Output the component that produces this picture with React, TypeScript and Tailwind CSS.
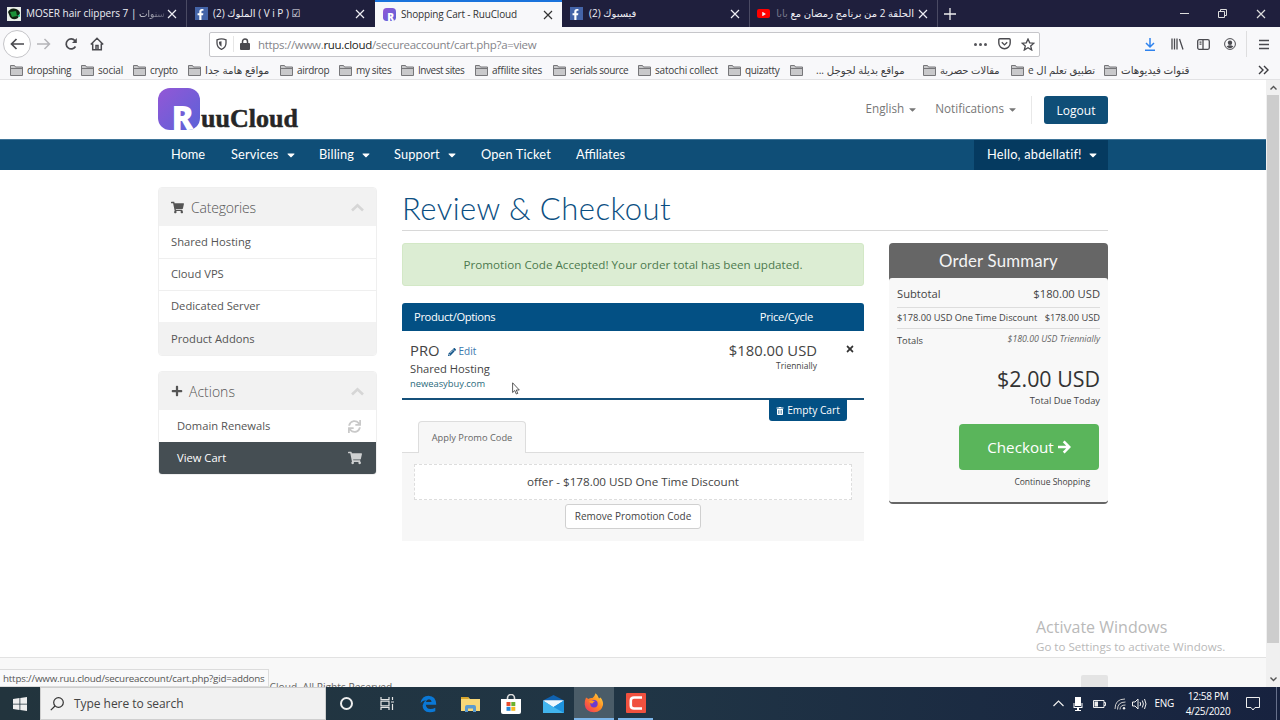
import React from "react";
import {
  FaShoppingCart,
  FaPlus,
  FaSync,
  FaPencilAlt,
  FaTimes,
  FaTrashAlt,
  FaFacebookF,
  FaPlay,
  FaCaretDown,
} from "react-icons/fa";

const ui = "font-['Open_Sans','DejaVu_Sans',sans-serif]";

function CloseX({ className = "" }: { className?: string }) {
  return (
    <svg viewBox="0 0 10 10" className={"h-[10px] w-[10px] shrink-0 " + className} stroke="currentColor" strokeWidth="1.2" fill="none">
      <path d="M1 1l8 8M9 1l-8 8" />
    </svg>
  );
}

function FacebookIcon() {
  return (
    <span className="flex h-[13px] w-[13px] shrink-0 items-end justify-end bg-[#4464a8] pr-[2px] text-white">
      <FaFacebookF size={11} />
    </span>
  );
}

function RuuMark({ size }: { size: number }) {
  return (
    <svg width={size} height={size} viewBox="0 0 42 42" className="shrink-0">
      <defs>
        <linearGradient id="ruu" x1="0" y1="0" x2="1" y2="1">
          <stop offset="0" stopColor="#9357d6" />
          <stop offset="1" stopColor="#5b62d8" />
        </linearGradient>
        <clipPath id="ruuclip">
          <rect width="42" height="42" rx="12" />
        </clipPath>
      </defs>
      <rect width="42" height="42" rx="12" fill="url(#ruu)" />
      <g clipPath="url(#ruuclip)">
        <text x="13.5" y="42" fill="#fff" fontSize="33" fontWeight="800" fontFamily="Open Sans, sans-serif">R</text>
      </g>
    </svg>
  );
}

function TabBar() {
  return (
    <div className="flex h-[27px] shrink-0 bg-[#1f1f3d] text-[10px] text-[#eeeef4]">
      <div className="flex w-[187px] items-center border-r border-[#4a4a63] pl-[7px] pr-[9px]">
        <svg width="14" height="14" viewBox="0 0 14 14" className="mr-[5px] shrink-0">
          <rect width="14" height="14" fill="#e8ede8" />
          <path d="M1 5Q3 1 7 1.500Q12 2 13 6L11 11Q6 14 3 10Z" fill="#10210f" />
          <path d="M3 5l6-1 1 5-5 1z" fill="#1c9138" />
          <path d="M10 9l3-2v3z" fill="#2c8" />
        </svg>
        <span className="whitespace-nowrap">
          MOSER hair clippers 7 | <span className="bg-linear-to-r from-white to-[#55556c] bg-clip-text text-[9px] text-transparent">سنوات</span>
        </span>
        <CloseX className="ml-auto" />
      </div>
      <div className="flex w-[188px] items-center gap-[5px] pl-[8px] pr-[10px]">
        <FacebookIcon />
        <span className="whitespace-nowrap" dir="ltr">(2) <span className="text-[10px]">الملوك</span> ( V i P ) ☑</span>
        <CloseX className="ml-auto" />
      </div>
      <div className="flex w-[187px] items-center gap-[5px] border-t-2 border-[#1a73dc] bg-[#f8f8fa] pl-[8px] pr-[9px] text-[#333]">
        <RuuMark size={13} />
        <span className="whitespace-nowrap tracking-[-0.17px]">Shopping Cart - RuuCloud</span>
        <CloseX className="ml-auto" />
      </div>
      <div className="flex w-[188px] items-center gap-[6px] border-r border-[#4a4a63] pl-[8px] pr-[9px]">
        <FacebookIcon />
        <span className="whitespace-nowrap">(2) <span className="text-[10px]">فيسبوك</span></span>
        <CloseX className="ml-auto" />
      </div>
      <div className="flex w-[188px] items-center border-r border-[#4a4a63] pl-[7px] pr-[9px]">
        <span className="flex h-[9px] w-[13px] shrink-0 items-center justify-center rounded-[2px] bg-[#f00]">
          <FaPlay size={4} />
        </span>
        <span className="ml-auto mr-[4px] whitespace-nowrap text-[10px]" dir="rtl">
          الحلقة 2 من برنامج رمضان مع <span className="text-[#77778a]">بابا</span>
        </span>
        <CloseX />
      </div>
      <svg width="12" height="12" viewBox="0 0 12 12" className="ml-[6px] mt-[8px] shrink-0" stroke="#eee" strokeWidth="1.3">
        <path d="M6 0v12M0 6h12" />
      </svg>
      <div className="ml-auto flex items-center gap-[29px] pr-[14px] text-[#ddd]">
        <span className="h-px w-[9px] bg-[#ddd]" />
        <svg width="9" height="9" viewBox="0 0 9 9" fill="none" stroke="currentColor">
          <path d="M.5 2.500h6v6h-6zM2.500 2.500v-2h6v6h-2" />
        </svg>
        <CloseX />
      </div>
    </div>
  );
}

function Toolbar() {
  return (
    <div className="flex h-[34px] shrink-0 items-center bg-[#f8f8fa] text-[#4a4a4f]">
      <span className="ml-[3px] flex h-[28px] w-[28px] items-center justify-center rounded-full border border-[#c4c4c8] bg-white">
        <svg width="14" height="12" viewBox="0 0 14 12" fill="none" stroke="currentColor" strokeWidth="1.700">
          <path d="M14 6H1.500M6.500 1l-5 5 5 5" />
        </svg>
      </span>
      <svg width="14" height="12" viewBox="0 0 14 12" fill="none" stroke="#b4b4b8" strokeWidth="1.500" className="ml-[6px]">
        <path d="M0 6h12.500M7.500 1l5 5-5 5" />
      </svg>
      <svg width="14" height="14" viewBox="0 0 14 14" fill="none" stroke="currentColor" strokeWidth="1.700" className="ml-[13px]">
        <path d="M11.500 9.500A5 5 0 1 1 11 3.700" />
        <path d="M12.800 1v5H8z" fill="currentColor" stroke="none" />
      </svg>
      <svg width="14" height="14" viewBox="0 0 14 14" fill="none" stroke="currentColor" strokeWidth="1.500" className="ml-[12px]">
        <path d="M.8 7.500L7 1.300l6.200 6.200M2.700 6.500v6.300h8.600V6.500M6 12.500v-4h2v4" />
      </svg>
      <div className="ml-[105px] flex h-[25px] w-[831px] items-center rounded-[2px] border border-[#c6c6ca] bg-white">
        <svg width="11" height="12" viewBox="0 0 11 12" fill="none" stroke="currentColor" strokeWidth="1.300" className="ml-[6px]">
          <path d="M1 1.800Q5.500 0 10 1.800V5Q10 9.500 5.500 11.300Q1 9.500 1 5Z" />
          <path d="M5.500 3.300v5.500Q3 7.500 3 5V3.700Z" fill="currentColor" stroke="none" />
        </svg>
        <span className="ml-[6px] h-[16px] w-px bg-[#e6e6e6]" />
        <svg width="10" height="12" viewBox="0 0 10 12" className="ml-[6px]">
          <path d="M2.500 6V3.500a2.500 2.500 0 0 1 5 0V6" fill="none" stroke="#4a4a4f" strokeWidth="1.500" />
          <rect y="5" width="10" height="7" rx="1" fill="#4a4a4f" />
        </svg>
        <span className="ml-[8px] pt-[2px] text-[11.5px] tracking-[-0.3px] text-[#85858a]">
          https://www.<span className="text-[#1c1c20]">ruu.cloud</span>/secureaccount/cart.php?a=view
        </span>
        <span className="ml-auto flex gap-[2px]">
          <i className="h-[3px] w-[3px] rounded-full bg-[#55555a]" />
          <i className="h-[3px] w-[3px] rounded-full bg-[#55555a]" />
          <i className="h-[3px] w-[3px] rounded-full bg-[#55555a]" />
        </span>
        <svg width="13" height="12" viewBox="0 0 13 12" fill="none" stroke="currentColor" strokeWidth="1.400" className="ml-[11px]">
          <path d="M1.800.8h9.400q1 0 1 1V5a5.700 5.700 0 0 1-11.400 0V1.800q0-1 1-1zM3.800 4.300l2.700 2.600 2.700-2.600" />
        </svg>
        <svg width="14" height="13" viewBox="0 0 14 13" fill="none" stroke="currentColor" strokeWidth="1.300" className="ml-[10px] mr-[4px]">
          <path d="M7 1l1.700 3.800 4.200.4-3.200 2.700 1 4.100L7 9.800 3.300 12l1-4.100L1.100 5.200l4.200-.4z" />
        </svg>
      </div>
      <svg width="12" height="13" viewBox="0 0 12 13" fill="none" stroke="#2f83ee" strokeWidth="1.500" className="ml-[104px]">
        <path d="M6 0v9M2 5l4 4 4-4M1 12.200h10" />
      </svg>
      <svg width="13" height="12" viewBox="0 0 13 12" fill="none" stroke="currentColor" strokeWidth="1.300" className="ml-[15px]">
        <path d="M1 .5v11M3.500 .5v11M6 .5v11M8.500 1l3.500 10.500" />
      </svg>
      <svg width="13" height="11" viewBox="0 0 13 11" fill="none" stroke="currentColor" strokeWidth="1.300" className="ml-[13px]">
        <rect x=".7" y=".7" width="11.600" height="9.600" rx="1.500" />
        <path d="M6 1v9M2.500 3.200H4.500M2.500 5.200H4.500" />
      </svg>
      <svg width="12" height="12" viewBox="0 0 12 12" className="ml-[14px]">
        <circle cx="6" cy="6" r="5.400" fill="none" stroke="#4a4a4f" strokeWidth="1" />
        <circle cx="6" cy="4.800" r="2.200" fill="#4a4a4f" />
        <path d="M2.500 8.500Q6 6 9.500 8.500Q6 12 2.500 8.500z" fill="#4a4a4f" />
      </svg>
      <span className="ml-[10px] h-[26px] w-px bg-[#dededf]" />
      <svg width="10" height="11" viewBox="0 0 10 11" stroke="currentColor" strokeWidth="1.500" className="ml-[12px]">
        <path d="M0 1.500h10M0 5.500h10M0 9.500h10" />
      </svg>
    </div>
  );
}

const bookmarks = [
  { t: "dropshing", w: "w-[71px]", c: "tracking-[-0.35px]" },
  { t: "social", w: "w-[52px]", c: "tracking-[-0.2px]" },
  { t: "crypto", w: "w-[55px]", c: "tracking-[-0.3px]" },
  { t: "مواقع هامة جدا", w: "w-[92px]", c: "text-[10.4px]" },
  { t: "airdrop", w: "w-[59px]", c: "tracking-[-0.3px]" },
  { t: "my sites", w: "w-[62px]", c: "tracking-[-0.35px]" },
  { t: "Invest sites", w: "w-[74px]", c: "tracking-[-0.45px]" },
  { t: "affilite sites", w: "w-[78px]", c: "tracking-[-0.2px]" },
  { t: "serials source", w: "w-[85px]", c: "tracking-[-0.4px]" },
  { t: "satochi collect", w: "w-[90px]", c: "tracking-[-0.2px]" },
  { t: "quizatty", w: "w-[62px]", c: "tracking-[-0.35px]" },
  { t: "مواقع بديلة لجوجل ...", w: "w-[133px]", c: "ml-[9px] text-[10.2px]" },
  { t: "مقالات حصرية", w: "w-[88px]", c: "text-[10px]" },
  { t: "تطبيق تعلم ال e", w: "w-[93px]", c: "text-[10.1px]" },
  { t: "قنوات فيديوهات", w: "w-[90px]", c: "text-[10.3px]" },
];

function Bookmarks() {
  return (
    <div className="flex h-[19px] shrink-0 items-center border-b border-[#e2e2e4] bg-[#f8f8fa] pl-[10px] text-[10px] text-[#3c3c40]">
      {bookmarks.map((b) => (
        <div key={b.t} className={"flex shrink-0 items-center gap-[4px] " + b.w}>
          <svg width="13" height="11" viewBox="0 0 13 11" className="shrink-0">
            <path d="M.5 10.500V.5h4l1 1.500h7v8.500z" fill="#c9c9cb" stroke="#77777a" />
            <path d="M.5 3.500h12" stroke="#77777a" />
          </svg>
          <span dir="auto" className={"whitespace-nowrap leading-[14px] " + b.c}>{b.t}</span>
        </div>
      ))}
      <svg width="11" height="10" viewBox="0 0 11 10" fill="none" stroke="#3c3c40" strokeWidth="1.400" className="ml-auto mr-[11px]">
        <path d="M1 1l4 4-4 4M6 1l4 4-4 4" />
      </svg>
    </div>
  );
}

function SiteHeader() {
  return (
    <div className="h-[59px] bg-white">
      <div className="mx-auto flex h-full w-[950px]">
        <div className="flex pt-[8px]">
          <RuuMark size={42} />
          <span className="mt-[15px] pl-px font-['Liberation_Serif',serif] text-[26px] font-bold leading-[32px] text-[#262626] [-webkit-text-stroke:0.5px_#262626]">uuCloud</span>
        </div>
        <div className="ml-auto flex pt-[16px] text-[11.7px] text-[#777]">
          <span className="flex h-[26px] items-center gap-[3px]">English <FaCaretDown size={11} /></span>
          <span className="ml-[17px] flex h-[26px] items-center gap-[3px]">Notifications <FaCaretDown size={11} /></span>
          <span className="ml-[13px] h-[28px] w-px bg-[#e8e8e8]" />
          <span className="ml-[12px] flex h-[28px] w-[64px] items-center justify-center rounded-[3px] bg-[#0f4e77] pt-px text-[12px] text-white">Logout</span>
        </div>
      </div>
    </div>
  );
}

function SiteNav() {
  return (
    <div className="h-[31px] border-t border-[#3f7599] bg-[#0f4e77]">
      <div className="mx-auto flex h-full w-[950px] items-center pl-[13px] font-['Lato',sans-serif] text-[12.8px] text-white">
        <span className="w-[60px]">Home</span>
        <span className="flex w-[88px] items-center gap-[6px] tracking-[0.15px]">Services <FaCaretDown size={12} /></span>
        <span className="flex w-[75px] items-center gap-[6px] tracking-[0.15px]">Billing <FaCaretDown size={12} /></span>
        <span className="flex w-[87px] items-center gap-[6px] tracking-[0.15px]">Support <FaCaretDown size={12} /></span>
        <span className="w-[95px] tracking-[0.15px]">Open Ticket</span>
        <span>Affiliates</span>
        <span className="ml-auto flex h-full w-[134px] items-center gap-[5px] bg-[#053a60] pl-[13px] tracking-[0.2px]">Hello, abdellatif! <FaCaretDown size={12} /></span>
      </div>
    </div>
  );
}

function PanelHead({ icon, title, className }: { icon: React.ReactNode; title: string; className: string }) {
  return (
    <div className="flex h-[38px] items-center bg-[#f2f2f2] pl-[12px] pr-[12px] text-[#555]">
      {icon}
      <span className={"ml-[6px] text-[14px] font-light " + className}>{title}</span>
      <svg width="13" height="9" viewBox="0 0 13 9" fill="none" stroke="#d6d6d6" strokeWidth="2.600" className="ml-auto">
        <path d="M1 7.500l5.500-5.300L12 7.500" />
      </svg>
    </div>
  );
}

function Sidebar() {
  return (
    <div className="w-[219px] shrink-0 text-[11.2px] text-[#555]">
      <div className="overflow-hidden rounded-[4px] border border-[#efefef]">
        <PanelHead icon={<FaShoppingCart size={13} />} title="Categories" className="pl-px tracking-[-0.2px]" />
        <div className="flex h-[32px] items-center pl-[12px]">Shared Hosting</div>
        <div className="flex h-[32px] items-center border-t border-[#efefef] pl-[12px]">Cloud VPS</div>
        <div className="flex h-[32px] items-center border-t border-[#efefef] pl-[12px]">Dedicated Server</div>
        <div className="flex h-[33px] items-center bg-[#f2f2f2] pl-[12px] pt-px">Product Addons</div>
      </div>
      <div className="mt-[15px] overflow-hidden rounded-[4px] border border-[#efefef]">
        <PanelHead icon={<FaPlus size={12} />} title="Actions" className="" />
        <div className="flex h-[32px] items-center justify-between pl-[18px] pr-[15px]">
          Domain Renewals <FaSync size={13} className="text-[#c9c9c9]" />
        </div>
        <div className="-mx-px flex h-[32px] items-center justify-between bg-[#454e53] pl-[19px] pr-[15px] text-white">
          View Cart <FaShoppingCart size={14} className="text-[#cfd1d2]" />
        </div>
      </div>
    </div>
  );
}

function Cart() {
  return (
    <div className="w-[462px] shrink-0">
      <div className="flex h-[43px] items-center justify-center rounded-[3px] border border-[#d3e8c6] bg-[#dcedd3] pt-px text-[11.67px] text-[#4c7a4e]">
        Promotion Code Accepted! Your order total has been updated.
      </div>
      <div className="mt-[17px] flex h-[28px] items-center justify-between rounded-t-[3px] bg-[#035084] pl-[12px] pr-[51px] text-[11.2px] tracking-[-0.35px] text-white">
        <span>Product/Options</span>
        <span>Price/Cycle</span>
      </div>
      <div className="flex h-[69px] border-b-2 border-[#15507a] pl-[8px] pr-[9px] text-[#444]">
        <div className="pt-[9px]">
          <div className="flex h-[20px] items-center text-[14.8px]">
            PRO
            <span className="ml-[8px] flex items-center gap-[3px] pt-[3px] text-[10px] text-[#3b78ad]">
              <FaPencilAlt size={8} className="text-[#135589]" /> Edit
            </span>
          </div>
          <div className="h-[16px] text-[11.2px] leading-[17px]">Shared Hosting</div>
          <div className="text-[9.35px] leading-[15px] text-[#2a6a7c]">neweasybuy.com</div>
        </div>
        <div className="ml-auto pt-[9px] text-right">
          <div className="text-[14.8px] leading-[20px]">$180.00 USD</div>
          <div className="text-[8.500px] leading-[12px]">Triennially</div>
        </div>
        <FaTimes size={10} className="ml-[28px] mt-[13px] text-[#333]" />
      </div>
      <div className="-mt-px ml-[367px] flex h-[22px] w-[78px] items-center justify-center gap-[3px] rounded-b-[3px] bg-[#035084] pt-[2px] text-[10.2px] text-white">
        <FaTrashAlt size={8} /> Empty Cart
      </div>
      <div className="relative z-10 ml-[16px] flex h-[32px] w-[108px] items-center justify-center rounded-t-[4px] border border-b-0 border-[#ddd] bg-[#f7f7f7] text-[9.300px] text-[#666]">
        Apply Promo Code
      </div>
      <div className="-mt-px flex h-[89px] flex-col items-center border-t border-[#ddd] bg-[#f7f7f7] pt-[11px] text-[#444]">
        <div className="flex h-[36px] w-[438px] items-center justify-center border border-dashed border-[#ddd] bg-white text-[11.67px]">
          offer - $178.00 USD One Time Discount
        </div>
        <div className="mt-[4px] flex h-[25px] w-[136px] shrink-0 items-center justify-center rounded-[3px] border border-[#d0d0d0] bg-white text-[10px]">
          Remove Promotion Code
        </div>
      </div>
    </div>
  );
}

function Summary() {
  return (
    <div className="h-[261px] w-[219px] shrink-0 overflow-hidden rounded-[4px] border-b-2 border-[#666] bg-[#666] text-[#444]">
      <div className="flex h-[35px] items-center justify-center font-['Lato',sans-serif] text-[16.800px] tracking-[0.2px] text-[#f4f4f4]">Order Summary</div>
      <div className="h-[225px] rounded-[3px] bg-[#f8f8f8] px-[8px] pt-[4px]">
        <div className="flex h-[26px] items-center justify-between border-b border-[#ddd] text-[11.200px]">
          <span>Subtotal</span>
          <span>$180.00 USD</span>
        </div>
        <div className="flex h-[21px] items-center justify-between border-b border-[#ddd] text-[9.300px]">
          <span className="whitespace-nowrap">$178.00 USD One Time Discount</span>
          <span className="whitespace-nowrap">$178.00 USD</span>
        </div>
        <div className="flex h-[23px] items-center justify-between text-[9.300px]">
          <span>Totals</span>
          <span className="pb-[2px] text-[8.800px] italic text-[#666]">$180.00 USD Triennially</span>
        </div>
        <div className="mt-[10px] text-right text-[21.400px] leading-[34px] text-[#333]">$2.00 USD</div>
        <div className="text-right text-[9.300px] leading-[10px]">Total Due Today</div>
        <div className="ml-auto mr-px mt-[18px] flex h-[46px] w-[140px] items-center justify-center gap-[4px] rounded-[4px] bg-[#5ab55b] text-[15.200px] text-white">
          Checkout
          <svg width="13" height="14" viewBox="0 0 13 14" fill="none" stroke="#fff" strokeWidth="2.600">
            <path d="M0 7h11M5.700 1.300L11.300 7l-5.600 5.700" />
          </svg>
        </div>
        <div className="mr-[10px] mt-[5px] text-right text-[8.500px] leading-[14px]">Continue Shopping</div>
      </div>
    </div>
  );
}

function Taskbar() {
  return (
    <div className="flex h-[33px] shrink-0 items-center bg-linear-to-r from-[#22343d] via-[#203545] to-[#17223f] text-white">
      <svg width="14" height="14" viewBox="0 0 14 14" className="ml-[13px] shrink-0" fill="#eee">
        <path d="M0 2l6.500-1v5.700H0zM7.300.9L14 0v6.700H7.300zM0 7.500h6.500v5.600L0 12.100zM7.300 7.500H14V14l-6.700-.9z" />
      </svg>
      <div className="ml-[13px] flex h-full w-[286px] items-center border border-[#cfcfcf] bg-[#f1f1f1] pl-[9px] text-[12px] tracking-[-0.05px] text-[#444]">
        <svg width="14" height="14" viewBox="0 0 14 14" fill="none" stroke="#333" strokeWidth="1.200" className="mr-[10px]">
          <circle cx="8.500" cy="5.500" r="4.800" />
          <path d="M5 9L.8 13.200" />
        </svg>
        Type here to search
      </div>
      <div className="flex w-[41px] justify-center">
        <i className="h-[13px] w-[13px] rounded-full border-2 border-[#eee]" />
      </div>
      <div className="flex w-[40px] justify-center">
        <svg width="14" height="13" viewBox="0 0 14 13" fill="none" stroke="#e6e6e6" strokeWidth="1.200">
          <path d="M1 0v2.500h8V0M1 13v-2.500h8V13M1 4.200h8v4.600H1zM12.500 0v3M12.500 7v6M11 5h3" />
        </svg>
      </div>
      <div className="flex w-[43px] justify-center">
        <svg width="17" height="18" viewBox="0 0 17 18">
          <path d="M.5 8Q2 .8 8.500.8Q16 1 16.300 9.800H5.800Q6.300 14 10.500 14Q13 14 15.300 12.700V16.200Q12.500 17.500 9.500 17.300Q2.500 16.800 2.600 10.500Q2.900 7 6 5.300Q2.500 5.500.5 8M5.900 7H11.600Q11.500 4.400 9 4.300Q6.500 4.400 5.900 7" fill="#0a78d6" fillRule="evenodd" />
        </svg>
      </div>
      <div className="flex w-[40px] justify-center">
        <svg width="19" height="16" viewBox="0 0 19 16">
          <path d="M0 1h7l2 2h10v12H0z" fill="#f8d878" />
          <path d="M0 1h7l1 2H0z" fill="#d9a62c" />
          <path d="M4 16v-5q0-2 2-2h7q2 0 2 2v5h-3v-3.500H7V16z" fill="#5b9bd0" />
        </svg>
      </div>
      <div className="flex w-[42px] justify-center">
        <svg width="20" height="20" viewBox="0 0 20 20">
          <path d="M6.500 6V4a3.500 3.500 0 0 1 7 0v2" fill="none" stroke="#ddd" strokeWidth="1.600" />
          <path d="M0 5h20v13q0 2-2 2H2q-2 0-2-2z" fill="#fff" />
          <path d="M5.500 8h4v4h-4z" fill="#e84b2c" />
          <path d="M10.300 8h4v4h-4z" fill="#6ab12e" />
          <path d="M5.500 12.800h4v4h-4z" fill="#2487d8" />
          <path d="M10.300 12.800h4v4h-4z" fill="#f5b921" />
        </svg>
      </div>
      <div className="flex w-[42px] justify-center">
        <svg width="21" height="18" viewBox="0 0 21 18">
          <path d="M0 5.500L10.500 0 21 5.500V18H0z" fill="#0f62b0" />
          <path d="M1 5.500h19L10.500 12z" fill="#eef7fd" />
          <path d="M0 5.500L10.500 12 21 5.500V18H0z" fill="#42b5ee" />
          <path d="M0 5.500h21L10.500 12z" fill="#eef7fd" />
          <path d="M21 5.500V18L10.500 12z" fill="#1e93de" />
        </svg>
      </div>
      <div className="flex h-full w-[40px] items-center justify-center border-b-2 border-[#7db6ea] bg-[#4a5c68]">
        <svg width="20" height="20" viewBox="0 0 20 20">
          <defs>
            <linearGradient id="fx" x1="1" y1="0" x2="0" y2="1">
              <stop offset="0" stopColor="#ffe14a" />
              <stop offset=".45" stopColor="#ff8a20" />
              <stop offset="1" stopColor="#f02a68" />
            </linearGradient>
          </defs>
          <path d="M2 4.500L4.500 6Q6 4.500 8.500 5Q10.500 4 11.500.3Q14 2 15 5.500L16.500 4.500Q19.500 8 19 12Q17.500 19 10 19.300Q1.500 19 .7 11.500Q.6 7.500 2 4.500z" fill="url(#fx)" />
          <circle cx="10" cy="10.800" r="3.700" fill="#6b3ad0" />
          <path d="M5 8.500q3-2 6 .3q-2 .2-2.500 1.700q-2 .5-3.500-2z" fill="#ff9b22" />
        </svg>
      </div>
      <div className="ml-[4px] flex h-full w-[35px] items-center justify-center border-b-2 border-[#7db6ea]">
        <svg width="20" height="20" viewBox="0 0 20 20">
          <rect width="20" height="20" rx="1" fill="#f0513f" />
          <path d="M16 4.500H8Q4.800 4.500 4.800 7.500v5Q4.800 15.500 8 15.500h8" fill="none" stroke="#fff" strokeWidth="2.600" />
        </svg>
      </div>
      <div className="ml-auto flex h-full items-center text-[10px]">
        <svg width="11" height="7" viewBox="0 0 11 7" fill="none" stroke="#eee" strokeWidth="1.200"><path d="M.5 6l5-5 5 5" /></svg>
        <svg width="10" height="14" viewBox="0 0 10 14" className="ml-[9px]" fill="#fff"><path d="M2 0h6v9H2zM.5 6h1v4h7V6h1v5H6v2h2v1H2v-1h2v-2H.5z" /></svg>
        <svg width="13" height="8" viewBox="0 0 13 8" className="ml-[10px]" fill="none" stroke="#eee"><path d="M.5.5h10.500v7H.5zM11 2.500h1.500v3H11" /><path d="M1.500 1.500H5v5H1.500z" fill="#eee" stroke="none" /></svg>
        <svg width="12" height="12" viewBox="0 0 12 12" className="ml-[8px]" fill="none" stroke="#ccc"><path d="M1 11Q1 1 11 1M3.500 11.500Q3.500 4 11.500 4M6 11.500Q6 7 11.500 7" /><circle cx="10" cy="10.300" r="1.200" fill="#eee" stroke="none" /></svg>
        <svg width="15" height="12" viewBox="0 0 15 12" className="ml-[6px]" fill="none" stroke="#eee"><path d="M.5 4H3l3-3v10L3 8H.5zM8 4q1.300 2 0 4M10.300 2.500q2.200 3.500 0 7M12.500 1q3 5 0 10" /></svg>
        <span className="ml-[8px] tracking-[-0.3px]">ENG</span>
        <div className="ml-[10px] w-[48px] text-center tracking-[-0.3px] leading-[15px]">
          <div className="whitespace-nowrap">12:58 PM</div>
          <div className="whitespace-nowrap">4/25/2020</div>
        </div>
        <svg width="14" height="14" viewBox="0 0 14 14" className="ml-[14px]" fill="none" stroke="#eee"><path d="M.5.5h13v10H9L7 13l-2-2.500H.5z" /></svg>
        <span className="ml-[16px] h-full w-px bg-[#66708a]" />
        <span className="w-[3px]" />
      </div>
    </div>
  );
}

export default function App() {
  return (
    <div className={"relative flex h-[720px] w-[1280px] flex-col overflow-hidden bg-white " + ui}>
      <TabBar />
      <Toolbar />
      <Bookmarks />
      <div className="flex h-[607px] shrink-0">
        <div className="flex w-[1266px] flex-col">
          <SiteHeader />
          <SiteNav />
          <div className="mx-auto flex w-[950px] grow gap-[25px] pt-[17px]">
            <Sidebar />
            <div className="flex flex-col">
              <h1 className="mb-[12px] h-[44px] border-b border-[#d8d8d8] font-['Lato',sans-serif] text-[31px] font-light leading-[42px] tracking-[0.45px] text-[#0b4f82]">
                Review &amp; Checkout
              </h1>
              <div className="flex gap-[25px]">
                <Cart />
                <Summary />
              </div>
            </div>
          </div>
          <div className="h-[30px] overflow-hidden border-t border-[#e2e2e2] bg-[#f8f8f8]">
            <div className="mx-auto flex w-[950px] items-start justify-between pt-[17px]">
              <span className="ml-[7px] mt-[4px] text-[10.200px] leading-[16px] text-[#666]">Copyright © 2020 RuuCloud. All Rights Reserved.</span>
              <span className="h-[27px] w-[27px] rounded-[2px] bg-[#e4e4e4]" />
            </div>
          </div>
        </div>
        <div className="flex w-[14px] flex-col items-center bg-[#f0f0f0]">
          <svg width="7" height="5" viewBox="0 0 7 5" fill="none" stroke="#555" strokeWidth="1.400" className="my-[5px] shrink-0"><path d="M.5 4.500l3-3 3 3" /></svg>
          <div className="h-[548px] w-[12px] bg-[#cdcdcd]" />
          <svg width="7" height="5" viewBox="0 0 7 5" fill="none" stroke="#555" strokeWidth="1.400" className="mb-[5px] mt-auto shrink-0"><path d="M.5.5l3 3 3-3" /></svg>
        </div>
      </div>
      <Taskbar />
      <div className="absolute left-0 top-[669px] flex h-[18px] w-[269px] items-center border border-l-0 border-[#dcdcdc] bg-[#f9f9fa] pl-[3px] pt-[2px] text-[9.800px] tracking-[-0.19px] text-[#555]">
        <span className="whitespace-nowrap">https://www.ruu.cloud/secureaccount/cart.php?gid=addons</span>
      </div>
      <div className="absolute left-[1036px] top-[616px] text-[#b9b9b9]">
        <div className="text-[16px] leading-[22px]">Activate Windows</div>
        <div className="whitespace-nowrap text-[11.550px] leading-[18px]">Go to Settings to activate Windows.</div>
      </div>
      <svg width="8" height="13" viewBox="0 0 8 13" className="absolute left-[512px] top-[382px]" fill="#fff" stroke="#333" strokeWidth=".8">
        <path d="M.6.8v9.700l2.200-2 1.500 3.500 1.500-.6-1.500-3.400h3z" />
      </svg>
    </div>
  );
}
